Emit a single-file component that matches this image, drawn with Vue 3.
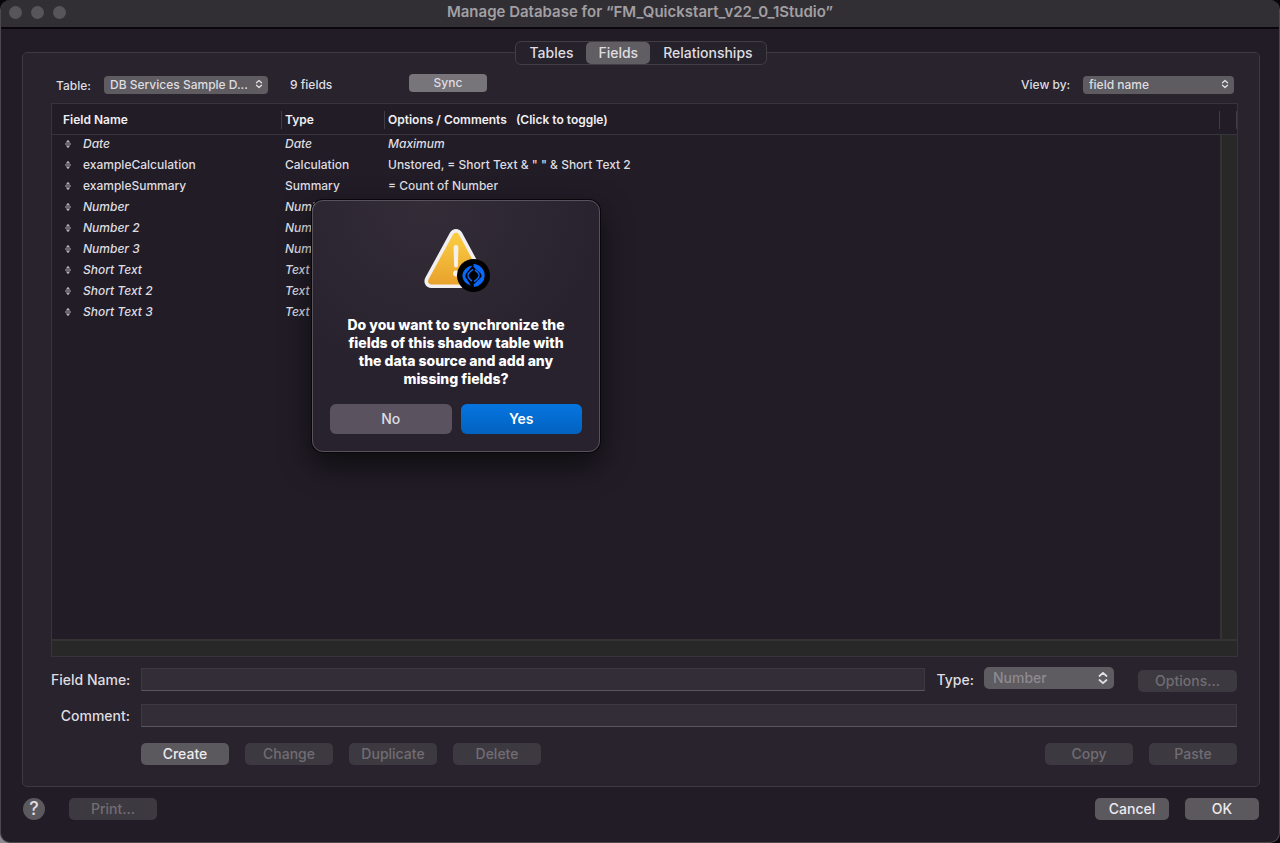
<script setup>
import { ref } from 'vue'

const tabs = ['Tables', 'Fields', 'Relationships']
const activeTab = ref('Fields')
const fieldName = ref('')
const comment = ref('')
const fields = [
  { name: 'Date', type: 'Date', options: 'Maximum', shadow: true },
  { name: 'exampleCalculation', type: 'Calculation', options: 'Unstored, = Short Text & " " & Short Text 2' },
  { name: 'exampleSummary', type: 'Summary', options: '= Count of Number' },
  { name: 'Number', type: 'Number', options: '', shadow: true },
  { name: 'Number 2', type: 'Number', options: '', shadow: true },
  { name: 'Number 3', type: 'Number', options: '', shadow: true },
  { name: 'Short Text', type: 'Text', options: '', shadow: true },
  { name: 'Short Text 2', type: 'Text', options: '', shadow: true },
  { name: 'Short Text 3', type: 'Text', options: '', shadow: true },
]
</script>

<template>
  <div class="window">
    <header class="titlebar">
      <div class="lights"><i></i><i></i><i></i></div>
      <h1>Manage Database for “FM_Quickstart_v22_0_1Studio”</h1>
    </header>

    <main class="content">
      <nav class="tabs">
        <button v-for="t in tabs" :key="t" type="button" :class="{ active: t === activeTab }" @click="activeTab = t">{{ t }}</button>
      </nav>

      <section class="panel">
        <div class="toolbar">
          <label class="table-label" for="table-select">Table:</label>
          <span class="popup table-popup">
            <select id="table-select"><option>DB Services Sample D...</option></select>
            <svg viewBox="0 0 8 10"><path d="M1.5 3.7 4 1.4 6.5 3.7M1.5 6.3 4 8.6 6.5 6.3" /></svg>
          </span>
          <span class="count">9 fields</span>
          <button type="button" class="sync">Sync</button>
          <label class="view-label" for="view-select">View by:</label>
          <span class="popup view-popup">
            <select id="view-select"><option>field name</option></select>
            <svg viewBox="0 0 8 10"><path d="M1.5 3.7 4 1.4 6.5 3.7M1.5 6.3 4 8.6 6.5 6.3" /></svg>
          </span>
        </div>

        <div class="list">
          <table>
            <colgroup><col class="c-name" /><col class="c-type" /><col /><col class="c-end" /></colgroup>
            <thead>
              <tr>
                <th class="first"><div>Field Name</div></th>
                <th><div>Type</div></th>
                <th><div>Options / Comments <span class="hint">(Click to toggle)</span></div></th>
                <th class="end"><div></div></th>
              </tr>
            </thead>
            <tbody>
              <tr v-for="f in fields" :key="f.name" :class="{ shadow: f.shadow }">
                <td class="name">
                  <svg class="handle" viewBox="0 0 8 10"><path d="M4 .8 6.2 3.4H1.8ZM4 9.2 6.2 6.6H1.8ZM1 4.5H7V5.5H1Z" /></svg>{{ f.name }}
                </td>
                <td>{{ f.type }}</td>
                <td>{{ f.options }}</td>
                <td></td>
              </tr>
            </tbody>
          </table>
          <div class="track-v"></div>
          <div class="track-h"></div>
        </div>

        <form class="editor" @submit.prevent>
          <label for="field-name">Field Name:</label>
          <div class="line">
            <input id="field-name" v-model="fieldName" type="text" />
            <label class="type-label" for="type-select">Type:</label>
            <span class="popup type-popup">
              <select id="type-select" disabled><option>Number</option></select>
              <svg viewBox="0 0 10 14"><path d="M1.5 5 5 1.8 8.5 5M1.5 9 5 12.2 8.5 9" /></svg>
            </span>
            <button type="button" class="btn options" disabled>Options...</button>
          </div>
          <label for="comment">Comment:</label>
          <input id="comment" v-model="comment" type="text" />
          <div class="actions">
            <button type="button" class="btn">Create</button>
            <button type="button" class="btn" disabled>Change</button>
            <button type="button" class="btn" disabled>Duplicate</button>
            <button type="button" class="btn" disabled>Delete</button>
            <span class="spacer"></span>
            <button type="button" class="btn" disabled>Copy</button>
            <button type="button" class="btn" disabled>Paste</button>
          </div>
        </form>
      </section>

      <footer class="footer">
        <button type="button" class="help" aria-label="Help">?</button>
        <button type="button" class="btn" disabled>Print...</button>
        <span class="spacer"></span>
        <button type="button" class="btn narrow">Cancel</button>
        <button type="button" class="btn narrow">OK</button>
      </footer>
    </main>

    <div class="dialog" role="alertdialog" aria-labelledby="dialog-text">
      <svg class="alert" viewBox="-2 0 72 68">
        <defs>
          <linearGradient id="amber" x1="0" y1="0" x2="0" y2="1">
            <stop offset="0" stop-color="#fbd043" />
            <stop offset="1" stop-color="#e8a02c" />
          </linearGradient>
        </defs>
        <path d="M29.6 6.4C31.7 2.8 36.3 2.8 38.4 6.4L62.6 51.4C64.6 55.2 62.3 59.2 58.4 59.2H9.2C5.3 59.2 3 55.2 5 51.4Z" fill="url(#amber)" stroke="#f1eff0" stroke-width="3.6" />
        <path d="M31.6 20.5a2.4 2.4 0 0 1 4.8 0L35.9 38.5a1.9 1.9 0 0 1-3.8 0Z" fill="#f6f1e8" />
        <circle cx="34" cy="46.5" r="2.9" fill="#f6f1e8" />
        <circle cx="51.5" cy="48.5" r="16.5" fill="#000" />
        <g fill="#0868f8">
          <path d="M50.5 38.6A11 11 0 0 0 40.3 48.5A11 11 0 0 0 48.8 58.6L43.8 50.5Q42.9 48.5 44.2 46.5Z" />
          <path d="M51.5 37A11.5 11.5 0 0 1 62.7 48.5A11.5 11.5 0 0 1 52 60L51.6 57.6L58.8 50.5Q60.2 48.5 58.8 46.5L51.5 40Z" />
        </g>
        <g fill="none" stroke="#0868f8" stroke-width="1.5">
          <path d="M51 42.4Q48.4 43.8 46.4 46.7Q45.3 48.5 46.4 50.3Q48 52.8 50 54" />
          <path d="M52 54.6Q54.6 53.2 56.6 50.3Q57.7 48.5 56.6 46.7Q55 44.2 53 43" />
        </g>
      </svg>
      <p id="dialog-text">Do you want to synchronize the fields of this shadow table with the data source and add any missing fields?</p>
      <div class="choices">
        <button type="button">No</button>
        <button type="button" class="primary">Yes</button>
      </div>
    </div>
  </div>
</template>

<style>
body {
  margin: 0;
  background: linear-gradient(45deg, #8d8b92 0 10px, #08060a 10px);
}
</style>

<style scoped>
* {
  box-sizing: border-box;
}

.window {
  position: relative;
  display: flex;
  flex-direction: column;
  min-height: 100vh;
  overflow: hidden;
  border: 1px solid #4b484e;
  border-top: 0;
  border-radius: 10px;
  background: #211c26;
  color: #dfdde0;
  font: 500 12px/20px Inter, "Liberation Sans", sans-serif;
}

button,
input,
select {
  margin: 0;
  font: inherit;
  color: inherit;
}

.titlebar {
  display: grid;
  grid-template-columns: 1fr auto 1fr;
  height: 29px;
  padding: 0 8px;
  border-bottom: 2px solid #09070b;
  background: #322f34;
}

.lights {
  display: flex;
  gap: 9px;
  padding-top: 6px;
}

.lights i {
  width: 13px;
  height: 13px;
  border-radius: 50%;
  background: #57545a;
}

h1 {
  margin: 2px 0 0;
  color: #a19fa3;
  font-size: 15px;
  font-weight: 600;
}

.content {
  display: flex;
  flex: 1;
  flex-direction: column;
  padding: 12px 19px 22px 21px;
}

.tabs {
  z-index: 1;
  display: flex;
  align-self: center;
  margin-bottom: -13px;
  border: 1px solid #413e45;
  border-radius: 6px;
  background: #26222b;
}

.tabs button {
  height: 22px;
  padding: 0 13px;
  border: 0;
  border-radius: 5px;
  background: transparent;
  font-size: 14px;
  line-height: 22px;
}

.tabs .active {
  padding: 0 12px;
  background: #605d63;
}

.panel {
  display: flex;
  flex: 1;
  flex-direction: column;
  padding: 20px 21px 21px 28px;
  border: 1px solid #3e3a41;
  border-radius: 5px;
  background: #28232d;
}

.toolbar {
  display: flex;
  align-items: flex-start;
  height: 30px;
  padding: 2px 4px 0 5px;
  line-height: 20px;
}

.table-label {
  width: 48px;
  padding-top: 1px;
}

.popup {
  position: relative;
  display: block;
}

.popup select {
  display: block;
  width: 100%;
  height: 18px;
  padding: 0 16px 0 6px;
  appearance: none;
  border: 0;
  border-radius: 4px;
  background: #5e5b61;
  line-height: 18px;
}

.popup svg {
  position: absolute;
  top: 4px;
  right: 5px;
  width: 8px;
  height: 10px;
  pointer-events: none;
}

.popup path {
  fill: none;
  stroke: #e2e0e3;
  stroke-width: 1.3;
  stroke-linecap: round;
  stroke-linejoin: round;
}

.table-popup {
  width: 164px;
  padding-top: 1px;
}

.count {
  width: 119px;
  margin-left: 22px;
}

.sync {
  width: 78px;
  height: 18px;
  margin-top: -1px;
  padding: 0;
  border: 0;
  border-radius: 4px;
  background: #77747a;
  line-height: 18px;
}

.view-label {
  width: 62px;
  margin-left: auto;
}

.view-popup {
  width: 151px;
  padding-top: 1px;
}

.list {
  display: grid;
  flex: 1;
  grid-template: 1fr 17px / 1fr 17px;
  border: 1px solid #38343b;
  background: #211c26;
}

table {
  grid-area: 1 / 1 / 2 / 3;
  align-self: start;
  width: 100%;
  table-layout: fixed;
  border-spacing: 0;
}

.c-name { width: 229px; }
.c-type { width: 103px; }
.c-end { width: 18px; }

th {
  height: 31px;
  padding: 2px 0 0;
  border-bottom: 1px solid #38343b;
  color: #f0eef1;
  font-weight: 600;
  text-align: left;
}

th div {
  height: 18px;
  padding-left: 3px;
  border-left: 1px solid #413d44;
  line-height: 18px;
}

.first div {
  padding-left: 11px;
  border: 0;
}

.end div {
  border-right: 1px solid #413d44;
}

.hint {
  margin-left: 6px;
}

td {
  height: 21px;
  padding: 0 0 0 4px;
  line-height: 18px;
  vertical-align: top;
  white-space: nowrap;
}

td.name {
  padding-left: 12px;
}

.shadow {
  font-style: italic;
}

.handle {
  width: 8px;
  height: 10px;
  margin-right: 11px;
  vertical-align: -1px;
  fill: #b5b2b7;
}

.track-v {
  grid-area: 1 / 2;
  margin-top: 31px;
  border-left: 2px solid #333333;
  background: #282828;
}

.track-h {
  grid-area: 2 / 1 / 3 / 3;
  border-top: 2px solid #333333;
  background: #282828;
}

.editor {
  display: grid;
  grid-template-columns: 79px 1fr;
  gap: 13px 11px;
  padding: 11px 1px 0 0;
  font-size: 14px;
}

.editor > label {
  line-height: 23px;
  text-align: right;
  white-space: nowrap;
}

input {
  width: 100%;
  height: 23px;
  padding: 0 4px;
  border: 1px solid #3d3942;
  border-bottom: 1px solid #5a565d;
  outline: 0;
  background: #332d38;
}

.line {
  display: flex;
  height: 23px;
}

.line input {
  flex: 1;
}

.type-label {
  margin-left: 12px;
  line-height: 23px;
}

.type-popup {
  width: 130px;
  margin: -1px 24px 0 10px;
}

.type-popup select {
  height: 22px;
  padding-left: 9px;
  border-radius: 5px;
  color: #8d8a90;
  line-height: 22px;
  opacity: 1;
}

.type-popup svg {
  width: 10px;
  height: 14px;
  right: 6px;
}

.type-popup path {
  stroke-width: 1.8;
}

.btn {
  width: 88px;
  height: 22px;
  padding: 0;
  border: 0;
  border-radius: 5px;
  background: #5b585e;
  color: #eceaed;
  font-size: 14px;
  line-height: 22px;
}

.btn:disabled {
  background: #3d3940;
  color: #706d73;
}

.options {
  width: 99px;
  margin-top: 2px;
}

.actions {
  display: flex;
  grid-column: 2;
  gap: 16px;
  padding-top: 3px;
}

.spacer {
  flex: 1;
}

.footer {
  display: flex;
  align-items: center;
  gap: 16px;
  padding: 11px 1px 0;
}

.help {
  width: 22px;
  height: 22px;
  margin-right: 8px;
  padding: 0;
  border: 0;
  border-radius: 50%;
  background: #5b585e;
  font-size: 18px;
  line-height: 22px;
}

.btn.narrow {
  width: 74px;
}

.dialog {
  position: absolute;
  top: 200px;
  left: 311px;
  width: 288px;
  padding: 26px 17px 17px;
  border: 1px solid #56525a;
  border-radius: 11px;
  background: radial-gradient(circle at 40% 0, #342d38, #28222e 60%);
  box-shadow: 0 0 0 1px #09070b, 0 12px 30px rgba(0, 0, 0, 0.6);
  text-align: center;
}

.alert {
  display: block;
  width: 72px;
  height: 68px;
  margin: 0 auto;
}

.dialog p {
  margin: 21px 0 16px;
  padding: 0 10px;
  color: #ffffff;
  font-size: 14px;
  font-weight: 800;
  line-height: 18px;
}

.choices {
  display: grid;
  grid-template-columns: 1fr 1fr;
  gap: 9px;
}

.choices button {
  height: 30px;
  padding: 0;
  border: 0;
  border-radius: 6px;
  background: #5a535f;
  color: #dfdce1;
  font-size: 14px;
}

.choices .primary {
  background: linear-gradient(#0675e0, #0262c0);
  color: #ffffff;
  font-weight: 600;
}
</style>
